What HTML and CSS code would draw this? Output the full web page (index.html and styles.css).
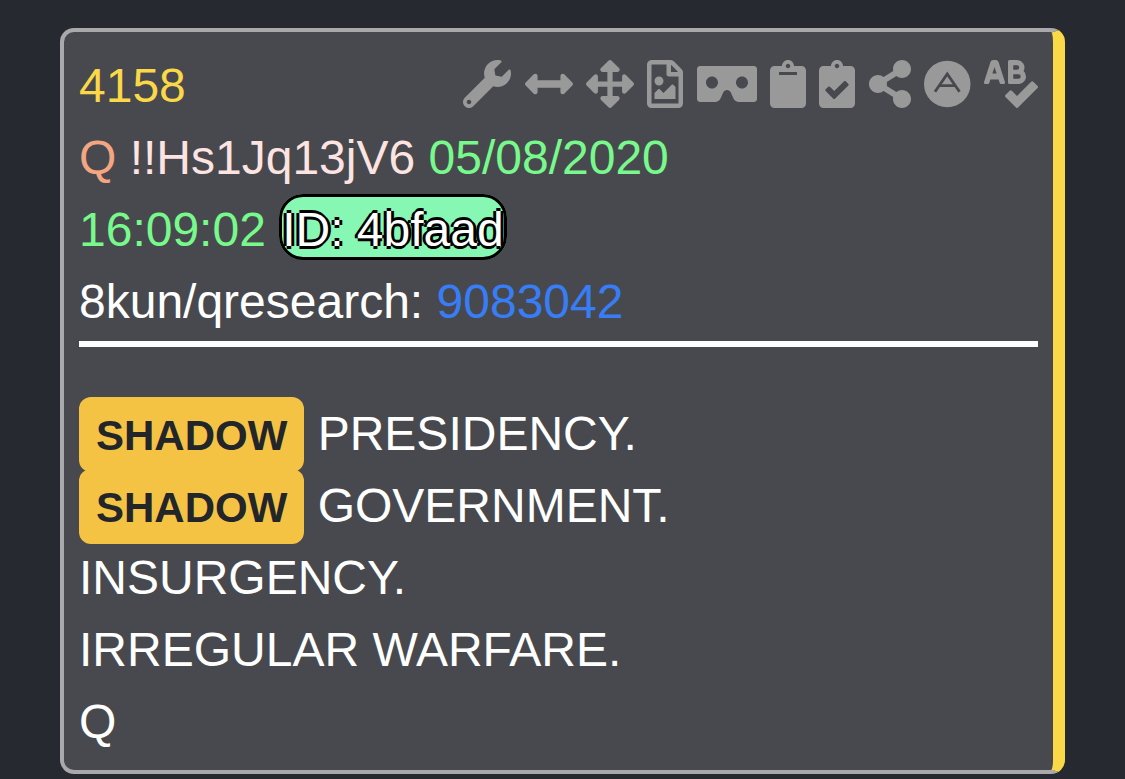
FILE: index.html
```html
<!DOCTYPE html>
<html lang="en">
<head>
    <meta charset="UTF-8"/>
    <meta content="width=device-width, initial-scale=1" name="viewport"/>
    <title>Post 4158</title>
    <link rel="stylesheet" href="styles.css">
</head>
<body>

<article class="post">
    <header class="post-header">
        <div class="post-top">
            <a class="post-number" href="#4158">4158</a>
            <div class="tools">
                <button type="button" aria-label="Tools"><svg viewBox="0 0 512 512"><path d="M507.73 109.1c-2.24-9.03-13.54-12.09-20.12-5.51l-74.36 74.36-67.88-11.31-11.31-67.88 74.36-74.36c6.62-6.62 3.43-17.9-5.66-20.16-47.38-11.74-99.55.91-136.58 37.93-39.64 39.64-50.55 97.1-34.05 147.2L18.74 402.76c-24.99 24.99-24.99 65.51 0 90.5 24.99 24.99 65.51 24.99 90.5 0l213.21-213.21c50.12 16.71 107.47 5.68 147.37-34.22 37.07-37.07 49.7-89.32 37.91-136.73zM64 472c-13.25 0-24-10.75-24-24 0-13.26 10.75-24 24-24s24 10.74 24 24c0 13.25-10.75 24-24 24z"/></svg></button>
                <button type="button" aria-label="Widen"><svg viewBox="0 0 512 512"><path d="M377.941 169.941V216H134.059v-46.059c0-21.382-25.851-32.09-40.971-16.971L7.029 239.029c-9.373 9.373-9.373 24.568 0 33.941l86.059 86.059c15.119 15.119 40.971 4.411 40.971-16.971V296h243.882v46.059c0 21.382 25.851 32.09 40.971 16.971l86.059-86.059c9.373-9.373 9.373-24.568 0-33.941l-86.059-86.059c-15.119-15.12-40.971-4.412-40.971 16.97z"/></svg></button>
                <button type="button" aria-label="Move"><svg viewBox="0 0 512 512"><path d="M352.201 425.775l-79.196 79.196c-9.373 9.373-24.568 9.373-33.941 0l-79.196-79.196c-15.119-15.119-4.411-40.971 16.971-40.97h51.162L228 284H127.196v51.162c0 21.382-25.851 32.09-40.971 16.971L7.029 272.937c-9.373-9.373-9.373-24.569 0-33.941L86.225 159.8c15.119-15.119 40.971-4.411 40.971 16.971V228H228V127.196h-51.23c-21.382 0-32.09-25.851-16.971-40.971l79.196-79.196c9.373-9.373 24.568-9.373 33.941 0l79.196 79.196c15.119 15.119 4.411 40.971-16.971 40.971h-51.162V228h100.804v-51.162c0-21.382 25.851-32.09 40.97-16.971l79.196 79.196c9.373 9.373 9.373 24.569 0 33.941L425.773 352.2c-15.119 15.119-40.971 4.411-40.97-16.971V284H284v100.804h51.23c21.382 0 32.09 25.851 16.971 40.971z"/></svg></button>
                <button type="button" aria-label="Save as image"><svg viewBox="0 0 384 512"><path d="M369.9 97.9L286 14C277 5 264.8-.1 252.1-.1H48C21.5 0 0 21.5 0 48v416c0 26.5 21.5 48 48 48h288c26.5 0 48-21.5 48-48V131.9c0-12.7-5.1-25-14.1-34zM332.1 128H256V51.9l76.1 76.1zM48 464V48h160v104c0 13.3 10.7 24 24 24h104v288H48zm32-48h224V288l-23.5-23.5c-4.7-4.7-12.3-4.7-17 0L176 352l-39.5-39.5c-4.7-4.7-12.3-4.7-17 0L80 352v64zm48-240c-26.5 0-48 21.5-48 48s21.5 48 48 48 48-21.5 48-48-21.5-48-48-48z"/></svg></button>
                <button type="button" aria-label="View"><svg viewBox="0 0 640 512"><path d="M608 64H32C14.33 64 0 78.33 0 96v320c0 17.67 14.33 32 32 32h160.22c25.19 0 48.03-14.77 58.36-37.74l27.74-61.64C286.21 331.08 302.35 320 320 320s33.79 11.08 41.68 28.62l27.74 61.64C399.75 433.23 422.6 448 447.78 448H608c17.67 0 32-14.33 32-32V96c0-17.67-14.33-32-32-32zM160 304c-35.35 0-64-28.65-64-64s28.65-64 64-64 64 28.65 64 64-28.65 64-64 64zm320 0c-35.35 0-64-28.65-64-64s28.65-64 64-64 64 28.65 64 64-28.65 64-64 64z"/></svg></button>
                <button type="button" aria-label="Copy"><svg viewBox="0 0 384 512"><path d="M384 112v352c0 26.51-21.49 48-48 48H48c-26.51 0-48-21.49-48-48V112c0-26.51 21.49-48 48-48h80c0-35.29 28.71-64 64-64s64 28.71 64 64h80c26.51 0 48 21.49 48 48zM192 40c-13.255 0-24 10.745-24 24s10.745 24 24 24 24-10.745 24-24-10.745-24-24-24m96 114v-20a6 6 0 0 0-6-6H102a6 6 0 0 0-6 6v20a6 6 0 0 0 6 6h180a6 6 0 0 0 6-6z"/></svg></button>
                <button type="button" aria-label="Copy checked"><svg viewBox="0 0 384 512"><path d="M336 64h-80c0-35.3-28.7-64-64-64s-64 28.7-64 64H48C21.5 64 0 85.5 0 112v352c0 26.5 21.5 48 48 48h288c26.5 0 48-21.5 48-48V112c0-26.5-21.5-48-48-48zM192 40c13.3 0 24 10.7 24 24s-10.7 24-24 24-24-10.7-24-24 10.7-24 24-24zm121.2 231.8l-143 141.8c-4.7 4.7-12.3 4.6-17-.1l-82.6-83.3c-4.7-4.7-4.6-12.3.1-17L99.1 285c4.7-4.7 12.3-4.6 17 .1l46 46.4 106-105.2c4.7-4.7 12.3-4.6 17 .1l28.2 28.4c4.7 4.8 4.6 12.3-.1 17z"/></svg></button>
                <button type="button" aria-label="Share"><svg viewBox="0 0 448 512"><path d="M352 320c-22.608 0-43.387 7.819-59.79 20.895l-102.486-64.054a96.551 96.551 0 0 0 0-41.683l102.486-64.054C308.613 184.181 329.392 192 352 192c53.019 0 96-42.981 96-96S405.019 0 352 0s-96 42.981-96 96c0 7.158.79 14.13 2.276 20.841L155.79 180.895C139.387 167.819 118.608 160 96 160c-53.019 0-96 42.981-96 96s42.981 96 96 96c22.608 0 43.387-7.819 59.79-20.895l102.486 64.054A96.301 96.301 0 0 0 256 416c0 53.019 42.981 96 96 96s96-42.981 96-96-42.981-96-96-96z"/></svg></button>
                <button type="button" aria-label="Answers"><svg viewBox="0 0 496 512"><circle cx="248" cy="256" r="248"/><path class="cut" d="M117 338L248 150l131 188M166 274h164"/></svg></button>
                <button type="button" aria-label="Abbreviations"><svg viewBox="0 0 576 512"><path d="M272 256h91.36c43.2 0 82-32.2 84.51-75.34a79.82 79.82 0 0 0-25.26-63.07 79.81 79.81 0 0 0 9.06-44.91C427.9 30.57 389.3 0 347 0h-75a16 16 0 0 0-16 16v224a16 16 0 0 0 16 16zm40-200h40a24 24 0 0 1 0 48h-40zm0 96h56a24 24 0 0 1 0 48h-56zM155.12 22.25A32 32 0 0 0 124.64 0H99.36a32 32 0 0 0-30.48 22.25L.59 235.73A16 16 0 0 0 16 256h24.93a16 16 0 0 0 15.42-11.73L68.29 208h87.42l11.94 36.27A16 16 0 0 0 183.07 256H208a16 16 0 0 0 15.42-20.27zM89.37 144L112 75.3l22.63 68.7zm482 132.48l-45.21-45.3a15.88 15.88 0 0 0-22.59 0l-151.5 151.5-55.41-55.5a15.88 15.88 0 0 0-22.59 0l-45.3 45.3a16 16 0 0 0 0 22.59l112 112.21a15.89 15.89 0 0 0 22.6 0l208-208.21a16 16 0 0 0-.02-22.59z"/></svg></button>
            </div>
        </div>
        <div class="post-meta">
            <span class="name">Q</span>
            <span class="trip">!!Hs1Jq13jV6</span>
            <time class="date">05/08/2020</time>
            <time class="date">16:09:02</time>
            <span class="user-id">ID: 4bfaad</span>
        </div>
        <div class="post-source">8kun/qresearch: <a href="#9083042">9083042</a></div>
    </header>

    <div class="post-text">
        <div><mark>SHADOW</mark> PRESIDENCY.</div>
        <div><mark>SHADOW</mark> GOVERNMENT.</div>
        <div>INSURGENCY.</div>
        <div>IRREGULAR WARFARE.</div>
        <div>Q</div>
    </div>
</article>

</body>
</html>
```
FILE: styles.css
```css
body {
  margin: 0;
  padding: 28px 60px 5px;
  background: #272930;
  color: #fff;
  font-family: "Liberation Sans", Arial, sans-serif;
  font-size: 48px;
  line-height: 72px;
}
a {
  text-decoration: none;
}
.post {
  padding: 18px 15px 12px;
  background: #48494e;
  border: 4px solid #a9a9ab;
  border-right: 12px solid #fad847;
  border-radius: 14px;
}
.post-header {
  padding-bottom: 3px;
  border-bottom: 6px solid #fff;
  margin-bottom: 51px;
}
.post-top {
  display: flex;
  justify-content: space-between;
}
.post-number {
  color: #fad847;
}
.tools button {
  padding: 0;
  border: none;
  background: none;
  color: #999;
  font: inherit;
  line-height: 48px;
  cursor: pointer;
}
.tools svg {
  height: 48px;
  vertical-align: -6px;
  fill: currentColor;
}
.tools .cut {
  fill: none;
  stroke: #48494e;
  stroke-width: 30px;
}
.post-meta {
  max-width: 640px;
}
.name {
  color: #f4a582;
}
.trip {
  color: #fde4e1;
}
.date {
  color: #78f98c;
}
.user-id {
  padding: 6px 0 1px;
  border: 3px solid #000;
  border-radius: 24px;
  background: #86f8b4;
  white-space: nowrap;
  text-shadow: 3px 0 #000, -3px 0 #000, 0 3px #000, 0 -3px #000;
}
.post-source a {
  color: #377df6;
}
mark {
  padding: 15px 17px 13px;
  border-radius: 12px;
  background: #f4c344;
  color: #222529;
  font-size: 42px;
  font-weight: bold;
  line-height: 42px;
}
```
